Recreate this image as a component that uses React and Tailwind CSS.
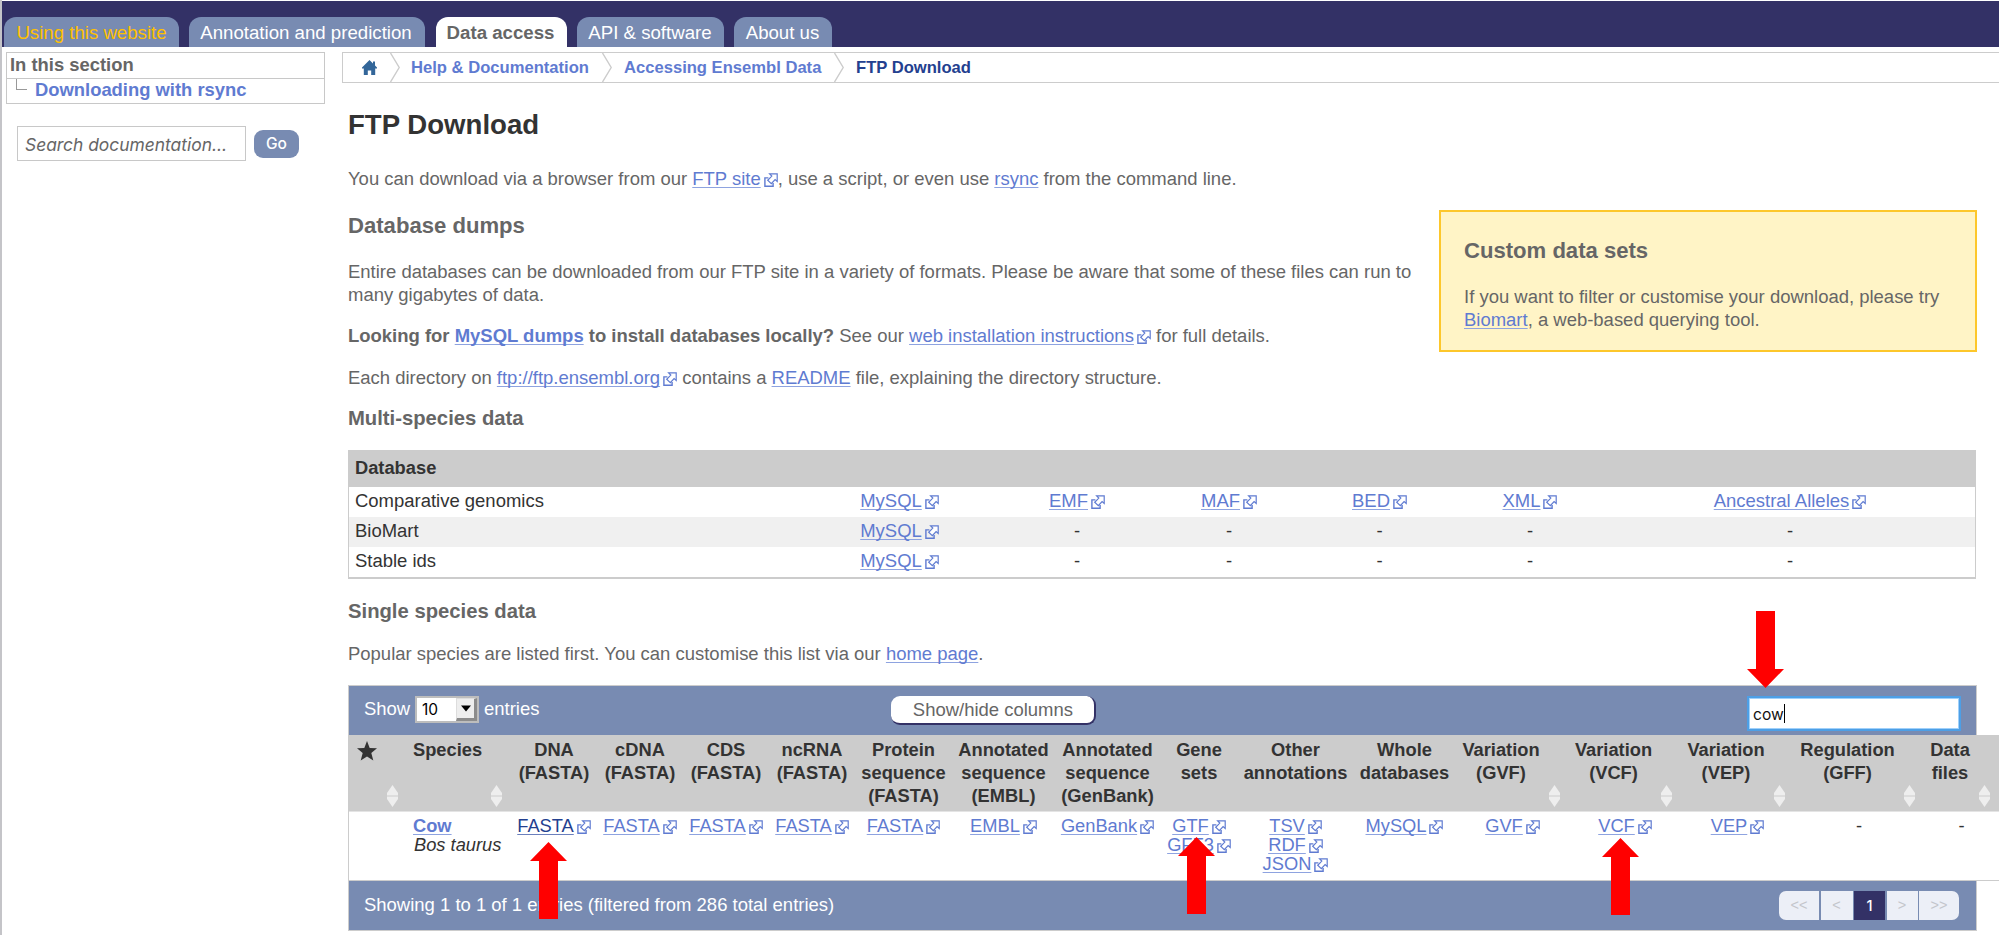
function ExternalIcon() {
  return (
    <svg className="ml-[3px] inline-block h-[14px] w-[14px] align-[-2px]" viewBox="0 0 14 14" fill="none" stroke="#5f7bd1" strokeWidth="1.4">
      <path d="M4.400 4.900H.9v8.300h8.200V10" />
      <path d="M5.600 .8h7.600v7.600l-2.100-1.900-3.800 4.200-3.600-3.400 4.100-4.200z" fill="#ffffff" strokeWidth="1.2" />
    </svg>
  );
}

function Link({ children, external = false, active = false }) {
  return (
    <>
      <a
        href="#"
        className={
          active
            ? "text-[#23408f] underline decoration-[#6b80bd] decoration-1 underline-offset-2 [text-decoration-skip-ink:none]"
            : "text-[#5f7bd1] underline decoration-[#8ea3e0] decoration-1 underline-offset-2 [text-decoration-skip-ink:none]"
        }
      >
        {children}
      </a>
      {external && <ExternalIcon />}
    </>
  );
}

function SortIcon() {
  return (
    <svg className="absolute right-[9px] bottom-[4px] h-[22px] w-[11px]" viewBox="0 0 11 22" fill="#eeeeee">
      <path d="M5.500 0L11 8v2.500H0V8zM5.500 22L0 14v-2.500h11V14z" />
    </svg>
  );
}

const tabs = [
  { label: "Using this website", box: "w-[175px] bg-[#788bb2] text-[#ffc000]" },
  { label: "Annotation and prediction", box: "ml-[10px] w-[236px] bg-[#788bb2] pr-[2px] text-white" },
  { label: "Data access", box: "ml-[11px] w-[131px] bg-white pr-[2px] font-bold text-[#666666]" },
  { label: "API & software", box: "ml-[10px] w-[147px] bg-[#788bb2] pr-[1px] text-white" },
  { label: "About us", box: "ml-[10px] w-[98px] bg-[#788bb2] pr-[1px] text-white" },
];

function Header() {
  return (
    <div className="mt-px ml-[2px] flex h-[46px] items-end bg-[#333166] pl-[2px]">
      {tabs.map((t) => (
        <div key={t.label} className={"h-[30px] rounded-t-[12px] text-center text-[18.65px] leading-[31px] whitespace-nowrap " + t.box}>
          {t.label}
        </div>
      ))}
    </div>
  );
}

function Sidebar() {
  return (
    <div className="w-[342px] shrink-0 pt-[5px] pl-[6px] text-[18.4px]">
      <div className="h-[52px] w-[319px] border border-[#c8c8c8] font-bold">
        <div className="h-[26px] border-b border-[#c8c8c8] pl-[3px] leading-[23px] text-[#666666]">In this section</div>
        <div className="flex h-[24px] pl-[9px]">
          <div className="mr-[8px] h-[11px] w-[11px] border-b border-l border-[#999999]" />
          <a href="#" className="leading-[21px] text-[#5f7bd1]">Downloading with rsync</a>
        </div>
      </div>
      <div className="mt-[22px] ml-[11px] flex items-center">
        <div className="h-[35px] w-[229px] border border-[#c8c8c8] pl-[7px] font-['Inter'] text-[17.4px] leading-[35px] whitespace-nowrap text-[#666666] italic">
          Search documentation...
        </div>
        <button className="ml-[8px] h-[28px] w-[45px] rounded-[9px] bg-[#788bb2] font-['Inter'] text-[15.5px] leading-[28px] font-medium text-white">
          Go
        </button>
      </div>
    </div>
  );
}

function Chevron({ className }) {
  return (
    <svg className={"h-[29px] w-[10px] shrink-0 " + className} viewBox="0 0 10 29" fill="none" stroke="#cccccc" strokeWidth="1.4">
      <path d="M.5 0l8.700 14.500L.5 29" />
    </svg>
  );
}

function Breadcrumbs() {
  return (
    <div className="mt-[5px] flex h-[31px] border-y border-l border-[#cccccc] pl-[19px] text-[16.6px] leading-[29px] font-bold whitespace-nowrap text-[#5f7bd1]">
      <svg className="mt-[7px] h-[15px] w-[15px] shrink-0" viewBox="0 0 15 15" fill="#336699">
        <path d="M7.500 0L11 3.400V1.600h2v3.800l2 2.100v.9h-1.800V15H9.200v-4.600H5.800V15H1.800V8.400H0v-.9z" />
      </svg>
      <Chevron className="ml-[13px]" />
      <a href="#" className="ml-[11px] w-[179px]">Help &amp; Documentation</a>
      <Chevron className="ml-[12px]" />
      <a href="#" className="ml-[12px] w-[198px]">Accessing Ensembl Data</a>
      <Chevron className="ml-[12px]" />
      <a href="#" className="ml-[12px] text-[#23408f]">FTP Download</a>
    </div>
  );
}

const databases = [
  { name: "Comparative genomics", cells: ["MySQL", "EMF", "MAF", "BED", "XML", "Ancestral Alleles"] },
  { name: "BioMart", cells: ["MySQL", "-", "-", "-", "-", "-"] },
  { name: "Stable ids", cells: ["MySQL", "-", "-", "-", "-", "-"] },
];

function DatabaseTable() {
  return (
    <div className="mt-[20px] w-[1628px] border border-b-2 border-[#cccccc] text-[#333333]">
      <div className="h-[36px] bg-[#cccccc] pl-[6px] text-[18.3px] leading-[34px] font-bold">Database</div>
      {databases.map((d) => (
        <div
          key={d.name}
          className="grid h-[30px] grid-cols-[450px_201px_154px_150px_151px_150px_370px] text-center leading-[28px] even:bg-white odd:bg-[#f0f0f0]"
        >
          <div className="pl-[6px] text-left">{d.name}</div>
          {d.cells.map((c, i) => (
            <div key={i}>{c === "-" ? "-" : <Link external>{c}</Link>}</div>
          ))}
        </div>
      ))}
    </div>
  );
}

const columns = [
  { head: ["DNA", "(FASTA)"], links: ["FASTA"], active: true },
  { head: ["cDNA", "(FASTA)"], links: ["FASTA"] },
  { head: ["CDS", "(FASTA)"], links: ["FASTA"] },
  { head: ["ncRNA", "(FASTA)"], links: ["FASTA"] },
  { head: ["Protein", "sequence", "(FASTA)"], links: ["FASTA"] },
  { head: ["Annotated", "sequence", "(EMBL)"], links: ["EMBL"] },
  { head: ["Annotated", "sequence", "(GenBank)"], links: ["GenBank"] },
  { head: ["Gene", "sets"], links: ["GTF", "GFF3"] },
  { head: ["Other", "annotations"], links: ["TSV", "RDF", "JSON"] },
  { head: ["Whole", "databases"], links: ["MySQL"] },
  { head: ["Variation", "(GVF)"], links: ["GVF"], sort: true },
  { head: ["Variation", "(VCF)"], links: ["VCF"], sort: true },
  { head: ["Variation", "(VEP)"], links: ["VEP"], sort: true },
  { head: ["Regulation", "(GFF)"], links: [], sort: true },
  { head: ["Data", "files"], links: [], sort: true },
];

const speciesGrid =
  "grid w-[1650px] grid-cols-[58px_104px_86px_86px_86px_86px_97px_103px_105px_78px_115px_103px_113px_112px_113px_130px_75px] text-center whitespace-nowrap text-[#333333] text-[18.3px] ";

const pages = [
  { label: "<<", box: "w-[40px] rounded-l-[7px] bg-[#eceff7] text-[#c4c6cc]" },
  { label: "<", box: "w-[32px] bg-[#eceff7] text-[#c4c6cc]" },
  { label: "1", box: "w-[31px] bg-[#333166] font-['Inter'] font-medium text-white" },
  { label: ">", box: "w-[31px] bg-[#eceff7] text-[#c4c6cc]" },
  { label: ">>", box: "w-[40px] rounded-r-[7px] bg-[#eceff7] text-[#c4c6cc]" },
];

function SpeciesTable() {
  return (
    <div className="mt-[20px] h-[246px] w-[1629px] border border-[#cccccc]">
      <div className="flex h-[49px] items-start bg-[#788bb2] pl-[15px] text-white">
        <span className="mt-[6px] w-[51px] leading-[34px]">Show</span>
        <div className="mt-[10px] flex h-[27px] w-[64px] border-2 border-[#bdbdbd] bg-white">
          <span className="w-[39px] pl-[5px] font-['Inter'] text-[15.5px] leading-[24px] text-black">10</span>
          <span className="flex flex-1 items-center justify-center border-t border-r-[3px] border-b-[3px] border-l border-t-[#dddddd] border-r-[#8c8c8c] border-b-[#8c8c8c] border-l-[#dddddd] bg-[#eeeeee]">
            <svg className="h-[7px] w-[10px]" viewBox="0 0 10 7">
              <path d="M0 .5h10L5 6.500z" />
            </svg>
          </span>
        </div>
        <span className="mt-[6px] ml-[5px] leading-[34px]">entries</span>
        <button className="mt-[10px] ml-[352px] h-[29px] w-[205px] rounded-[9px] border-r-2 border-b-2 border-[#333166] bg-white leading-[27px] text-[#666666]">
          Show/hide columns
        </button>
        <div className="mt-[10px] mr-[15px] ml-auto flex h-[35px] w-[214px] items-center border-2 border-[#4d9fe6] bg-white pl-[4px] font-['Inter'] text-[15.6px] text-[#111111] shadow-[inset_0_0_0_1px_#9fd0fa]">
          <span className="mt-[2px]">cow</span>
          <span className="h-[19px] w-px bg-black" />
        </div>
      </div>
      <div className={speciesGrid + "h-[76px] bg-[#cccccc] pt-[3px] leading-[23px] font-bold"}>
        <div className="relative h-[73px]">
          <svg className="mt-[3px] ml-[8px] h-[20px] w-[20px]" viewBox="0 0 20 20" fill="#333333">
            <path d="M10 0l2.700 6.900 7.300.4-5.700 4.600 2 7.600L10 15.400l-6.300 4.100 2-7.600L0 7.300l7.300-.4z" />
          </svg>
          <SortIcon />
        </div>
        <div className="relative h-[73px] pl-[6px] text-left">
          Species
          <SortIcon />
        </div>
        {columns.map((c, i) => (
          <div key={i} className={c.sort ? "relative h-[73px] pr-[23px]" : "relative h-[73px]"}>
            {c.head.map((h) => (
              <div key={h} className="flex justify-center">{h}</div>
            ))}
            {c.sort && <SortIcon />}
          </div>
        ))}
      </div>
      <div className={speciesGrid + "h-[70px] border-y border-t-[#e4e4e4] border-b-[#cccccc] bg-white pt-[4px] leading-[19px]"}>
        <div />
        <div className="pl-[6px] text-left">
          <div className="font-bold"><Link>Cow</Link></div>
          <div className="pl-px italic">Bos taurus</div>
        </div>
        {columns.map((c, i) => (
          <div key={i}>
            {c.links.length === 0 && "-"}
            {c.links.map((l) => (
              <div key={l} className="h-[19px]">
                <Link external active={c.active}>{l}</Link>
              </div>
            ))}
          </div>
        ))}
      </div>
      <div className="flex h-[49px] items-center justify-between bg-[#788bb2] pr-[17px] pl-[15px] text-white">
        <span className="pb-[3px]">Showing 1 to 1 of 1 entries (filtered from 286 total entries)</span>
        <div className="flex gap-[1.5px] text-center text-[14.5px] leading-[29px]">
          {pages.map((p) => (
            <div key={p.label} className={"h-[29px] " + p.box}>{p.label}</div>
          ))}
        </div>
      </div>
    </div>
  );
}

function Arrow({ className }) {
  return (
    <svg className={"absolute h-[77px] w-[37px] " + className} viewBox="0 0 37 77" fill="#ff0000">
      <path d="M18.500 0L37 19h-9v58H9V19H0z" />
    </svg>
  );
}

export default function App() {
  return (
    <div className="relative h-[935px] w-[1999px] overflow-hidden bg-white font-['Liberation_Sans',Arial,sans-serif] text-[18.48px] leading-[23px] text-[#666666]">
      <Header />
      <div className="flex">
        <Sidebar />
        <main className="w-[1657px] shrink-0">
          <Breadcrumbs />
          <div className="pl-[6px]">
            <h1 className="mt-[26px] text-[27.6px] leading-[32px] font-bold text-[#333333]">FTP Download</h1>
            <p className="mt-[26px]">
              You can download via a browser from our <Link external>FTP site</Link>, use a script, or even use <Link>rsync</Link> from the command line.
            </p>
            <div className="flex items-start">
              <div className="w-[1091px]">
                <h2 className="mt-[22px] text-[22.1px] leading-[28px] font-bold">Database dumps</h2>
                <p className="mt-[20px]">
                  Entire databases can be downloaded from our FTP site in a variety of formats. Please be aware that some of these files can run to
                  <br />
                  many gigabytes of data.
                </p>
                <p className="mt-[18px]">
                  <b>Looking for <Link>MySQL dumps</Link> to install databases locally?</b> See our <Link external>web installation instructions</Link> for full details.
                </p>
                <p className="mt-[19px]">
                  Each directory on <Link external>ftp://ftp.ensembl.org</Link> contains a <Link>README</Link> file, explaining the directory structure.
                </p>
              </div>
              <aside className="mt-[20px] h-[142px] w-[538px] border-2 border-[#fdc72b] bg-[#fff4c6] pt-[25px] pl-[23px]">
                <h2 className="text-[22.1px] leading-[28px] font-bold">Custom data sets</h2>
                <p className="mt-[20px]">
                  If you want to filter or customise your download, please try
                  <br />
                  <Link>Biomart</Link>, a web-based querying tool.
                </p>
              </aside>
            </div>
            <h3 className="mt-[17px] text-[20.25px] leading-[24px] font-bold">Multi-species data</h3>
            <DatabaseTable />
            <h3 className="mt-[20px] text-[20.25px] leading-[24px] font-bold">Single species data</h3>
            <p className="mt-[19px]">
              Popular species are listed first. You can customise this list via our <Link>home page</Link>.
            </p>
            <SpeciesTable />
          </div>
        </main>
      </div>
      <div className="absolute top-0 left-0 h-full w-[2px] bg-[#c4c4c8]" />
      <Arrow className="top-[842px] left-[530px]" />
      <Arrow className="top-[837px] left-[1178px]" />
      <Arrow className="top-[838px] left-[1602px]" />
      <Arrow className="top-[611px] left-[1747px] rotate-180" />
    </div>
  );
}
